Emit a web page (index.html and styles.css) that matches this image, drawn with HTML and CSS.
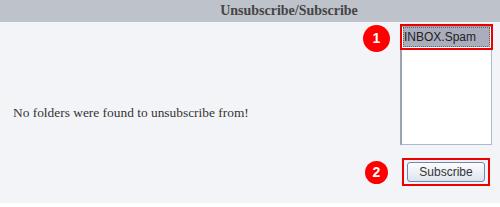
FILE: index.html
```html
<!DOCTYPE html>
<html lang="en">
<head>
  <meta charset="UTF-8">
  <title>Unsubscribe/Subscribe</title>
  <link rel="stylesheet" href="styles.css">
</head>
<body>
  <div class="panel">
    <div class="header">Unsubscribe/Subscribe</div>
    <div class="content">
      <div class="left">
        <p class="msg">No folders were found to unsubscribe from!</p>
      </div>
      <div class="right">
        <div class="row">
          <span class="badge">1</span>
          <div class="listbox">
            <div class="option selected">INBOX.Spam</div>
          </div>
        </div>
        <div class="row row-btn">
          <span class="badge">2</span>
          <div class="mark">
            <button class="btn">Subscribe</button>
          </div>
        </div>
      </div>
    </div>
  </div>
</body>
</html>
```

FILE: styles.css
```css
body {
  margin: 0;
  padding: 0;
  background: #fff;
  font-family: 'Liberation Serif', serif;
  color: #333;
}

.panel {
  width: 500px;
}

.header {
  height: 22px;
  line-height: 22px;
  background: #bec2ca;
  text-align: center;
  padding-left: 78px;
  font-weight: bold;
  font-size: 14px;
  color: #454545;
}

.content {
  display: flex;
  height: 181px;
  background: #f3f4f8;
}

.left {
  flex: 1;
  display: flex;
  align-items: center;
  padding-left: 13px;
}

.msg {
  margin: 0;
  font-size: 13.4px;
  color: #333;
}

.right {
  width: 130px;
  margin-right: 7px;
  padding-top: 3px;
}

.row {
  display: flex;
  align-items: flex-start;
}

.badge {
  width: 27px;
  height: 27px;
  border-radius: 50%;
  background: #f00;
  color: #fff;
  font-family: 'Liberation Sans', Arial, sans-serif;
  font-weight: bold;
  font-size: 14px;
  line-height: 27px;
  text-align: center;
  margin-right: 10px;
}

.listbox {
  width: 89px;
  height: 117px;
  background: #fff;
  border: 1px solid #a9bbd3;
  border-left: 2px solid #9aa3ae;
  border-top: 2px solid #9aa3ae;
}

.option {
  font-family: 'Liberation Sans', Arial, sans-serif;
  font-size: 12px;
  color: #222;
  height: 18px;
  line-height: 18px;
}

.option.selected {
  background: #aaaebc;
  border: 1px dotted #666;
  margin: 0 1px;
  outline: 2px solid #e00;
  outline-offset: 1px;
}

.row-btn {
  margin-top: 13px;
  align-items: center;
}

.row-btn .badge {
  width: 23px;
  height: 23px;
  line-height: 23px;
  margin-left: 2px;
  margin-right: 14px;
}

.mark {
  border: 2px solid #e00;
  padding: 2px 3px;
}

.btn {
  display: block;
  width: 78px;
  height: 20px;
  border: 1px solid #6f88b0;
  border-radius: 3px;
  background: linear-gradient(#fdfdfe, #dde3ee);
  font-family: 'Liberation Sans', Arial, sans-serif;
  font-size: 12px;
  color: #333;
  padding: 0;
}
```
